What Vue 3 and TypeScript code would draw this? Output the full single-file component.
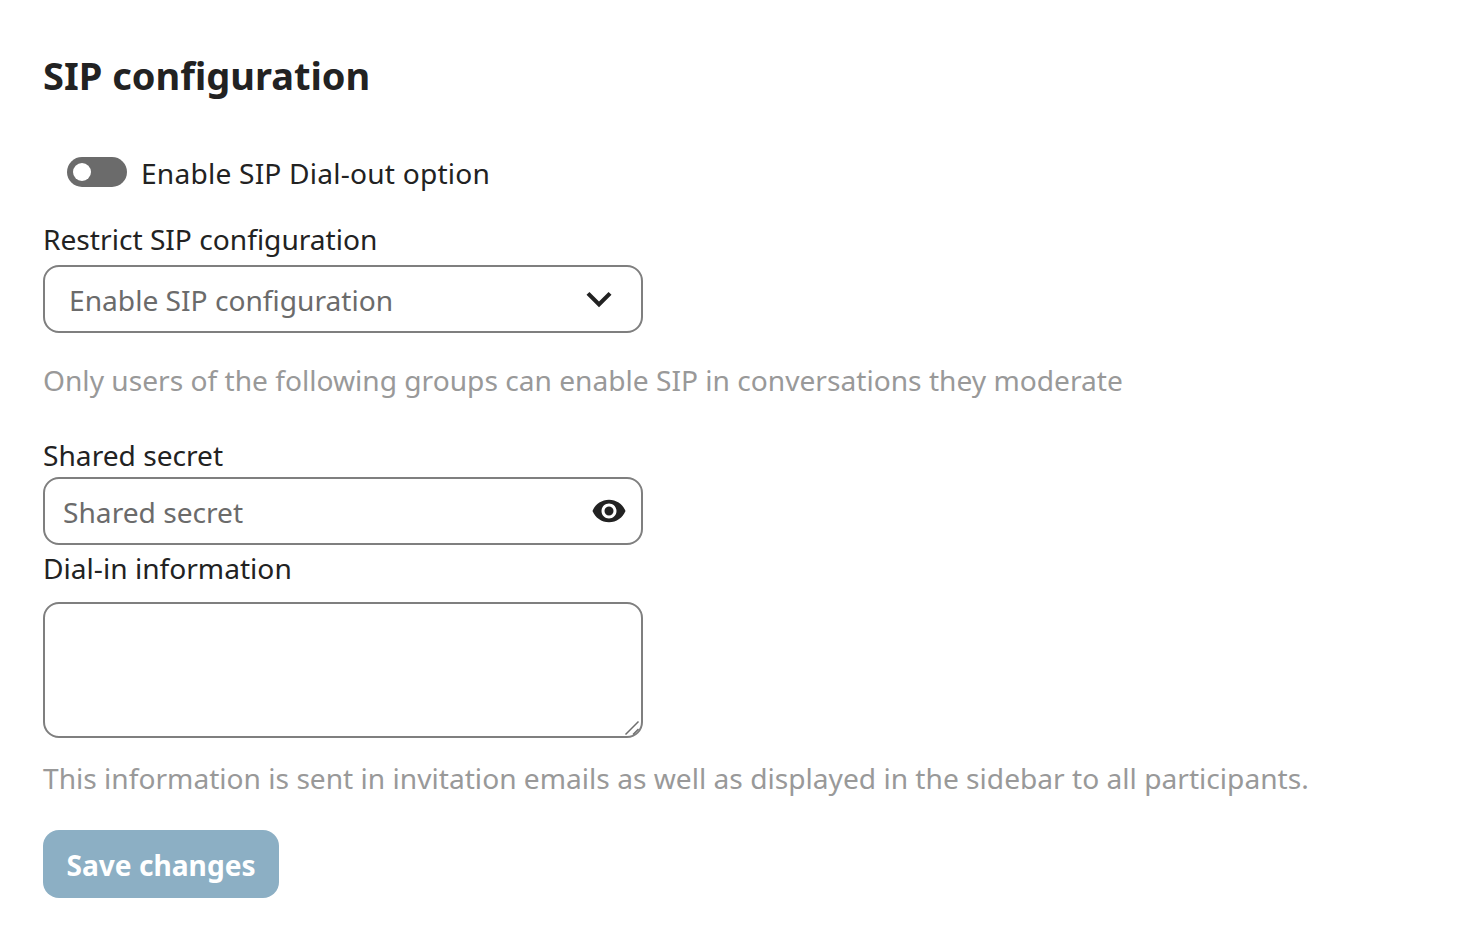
<script setup lang="ts">
import { ref } from 'vue'

const dialOut = ref(false)
const secret = ref('')
const dialIn = ref('')
</script>

<template>
  <section class="section">
    <h2 class="title">SIP configuration</h2>

    <label class="switch-row">
      <span class="switch"><span class="knob"></span></span>
      <input v-model="dialOut" class="hidden-check" type="checkbox" />
      <span class="switch-text">Enable SIP Dial-out option</span>
    </label>

    <div class="field-label restrict">Restrict SIP configuration</div>
    <div class="select">
      <span class="select-text">Enable SIP configuration</span>
      <svg class="chevron" width="50" height="50" viewBox="0 0 24 24">
        <path d="M7.41 8.58 12 13.17l4.59-4.59L18 10l-6 6-6-6z" fill="#222" />
      </svg>
    </div>
    <p class="hint first-hint">Only users of the following groups can enable SIP in conversations they moderate</p>

    <div class="field-label secret-label">Shared secret</div>
    <div class="input-wrap">
      <input v-model="secret" class="input" type="password" placeholder="Shared secret" />
      <svg class="eye" width="36" height="36" viewBox="0 0 24 24">
        <path d="M12 4.5C7 4.5 2.73 7.61 1 12c1.73 4.39 6 7.5 11 7.5s9.27-3.11 11-7.5c-1.73-4.39-6-7.5-11-7.5zM12 17c-2.76 0-5-2.24-5-5s2.24-5 5-5 5 2.24 5 5-2.24 5-5 5zm0-8c-1.66 0-3 1.34-3 3s1.34 3 3 3 3-1.34 3-3-1.34-3-3-3z" fill="#222" />
      </svg>
    </div>

    <div class="field-label dial-label">Dial-in information</div>
    <div class="textarea-wrap">
      <textarea v-model="dialIn" class="textarea"></textarea>
      <svg class="grip" width="18" height="18" viewBox="0 0 18 18">
        <path d="M1.5 15.5 14.5 2.5M9 15.5l5.5-5.5" fill="none" stroke="#6e6e6e" stroke-width="1.5" />
      </svg>
    </div>
    <p class="hint second-hint">This information is sent in invitation emails as well as displayed in the sidebar to all participants.</p>

    <button class="save" type="button" disabled>Save changes</button>
  </section>
</template>

<style>
body {
  background: #fff;
}
</style>

<style scoped>
.section {
  padding: 51px 43px 0;
  font-family: "Noto Sans", "Open Sans", sans-serif;
  font-size: 28.15px;
  color: #222;
}

.title {
  margin: 0;
  font-size: 38px;
  font-weight: 700;
  line-height: 48px;
}

.switch-row {
  display: flex;
  align-items: center;
  gap: 14px;
  height: 40px;
  margin-top: 53px;
  padding-left: 24px;
}

.switch-text {
  padding-top: 2px;
  letter-spacing: 0.2px;
}

.switch {
  position: relative;
  width: 60px;
  height: 30px;
  border-radius: 15px;
  background: #6b6b6b;
}

.knob {
  position: absolute;
  left: 6px;
  top: 6px;
  width: 18px;
  height: 18px;
  border-radius: 50%;
  background: #fff;
}

.hidden-check {
  display: none;
}

.field-label {
  line-height: 40px;
}

.restrict {
  height: 47px;
  margin-top: 26px;
  line-height: 42px;
}

.select {
  display: flex;
  align-items: center;
  justify-content: space-between;
  box-sizing: border-box;
  width: 600px;
  height: 68px;
  padding: 0 17px 0 24px;
  border: 2px solid #7f7f7f;
  border-radius: 16px;
  color: #6b6b6b;
}

.select-text {
  padding-top: 2px;
}

.hint {
  margin: 0;
  line-height: 40px;
  color: #999;
}

.first-hint {
  margin-top: 27px;
}

.secret-label {
  height: 42px;
  margin-top: 35px;
}

.input-wrap {
  position: relative;
  width: 600px;
  height: 68px;
}

.input {
  display: block;
  box-sizing: border-box;
  width: 100%;
  height: 100%;
  padding: 2px 60px 0 18px;
  border: 2px solid #7f7f7f;
  border-radius: 16px;
  outline: none;
  background: #fff;
  font: inherit;
  color: #222;
}

.input::placeholder {
  color: #6b6b6b;
  opacity: 1;
}

.eye {
  position: absolute;
  right: 16px;
  top: 16px;
}

.dial-label {
  height: 40px;
  margin-top: 3px;
}

.textarea-wrap {
  position: relative;
  width: 600px;
  margin-top: 14px;
}

.textarea {
  display: block;
  box-sizing: border-box;
  width: 600px;
  height: 136px;
  padding: 10px 18px;
  border: 2px solid #7f7f7f;
  border-radius: 16px;
  outline: none;
  resize: none;
  font: inherit;
  color: #222;
}

.grip {
  position: absolute;
  right: 1px;
  bottom: 1px;
  pointer-events: none;
}

.second-hint {
  margin-top: 20px;
}

.save {
  display: block;
  width: 236px;
  height: 68px;
  margin-top: 32px;
  padding: 2px 0 0;
  border: none;
  border-radius: 16px;
  background: #8cafc4;
  font: inherit;
  font-weight: 700;
  color: #fff;
}
</style>
